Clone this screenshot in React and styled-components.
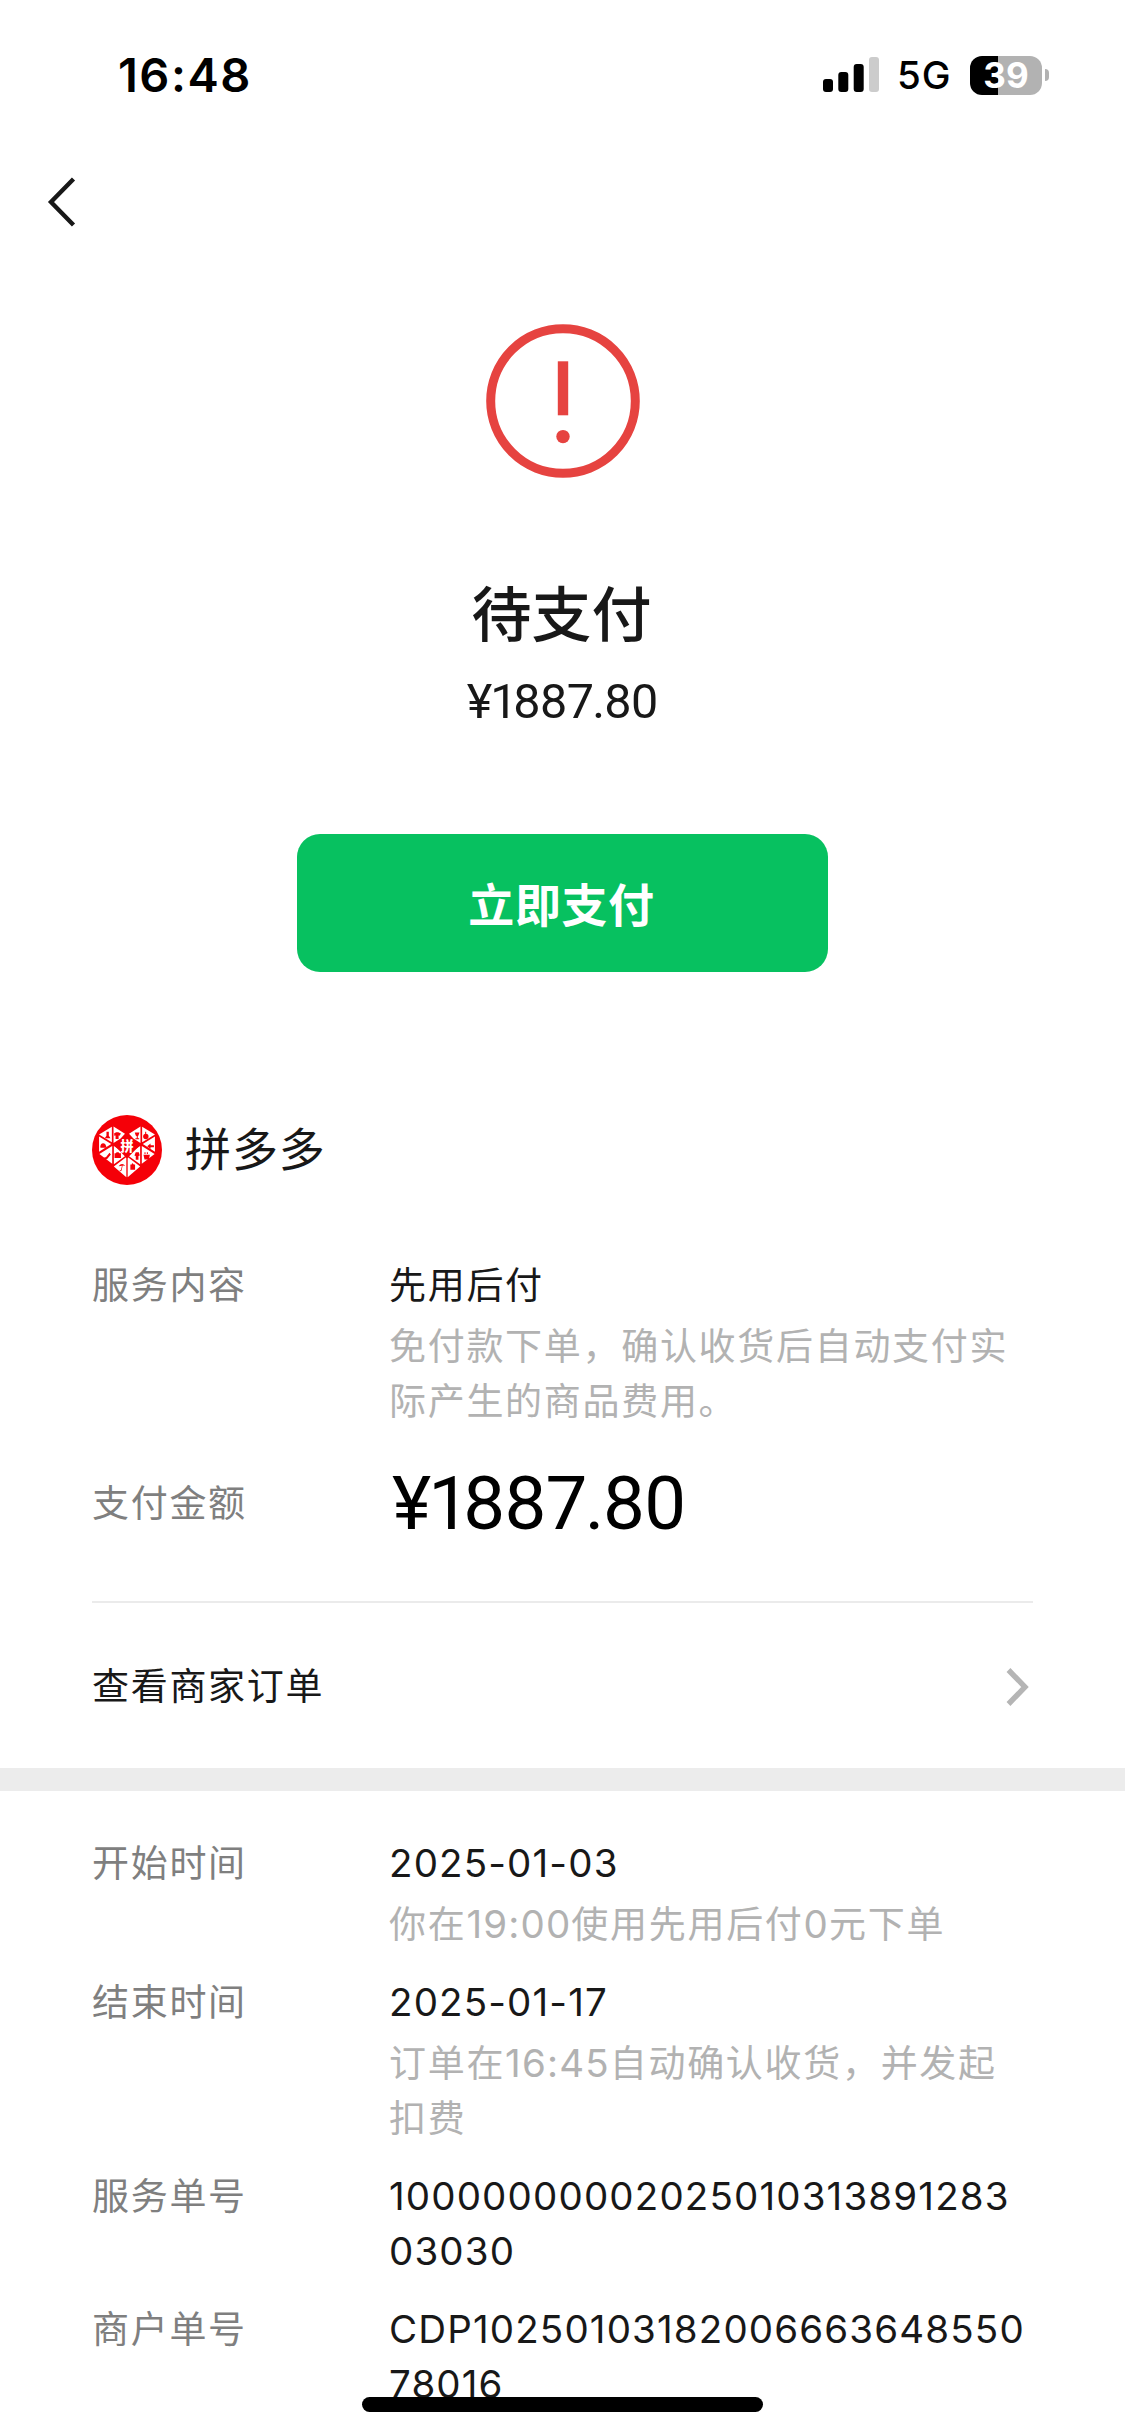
import React from "react";
import styled, { createGlobalStyle } from "styled-components";

const service = [
  {
    label: "服务内容",
    lines: ["先用后付"],
    note: ["免付款下单，确认收货后自动支付实", "际产生的商品费用。"],
  },
];

const records = [
  { label: "开始时间", lines: ["2025-01-03"], note: ["你在19:00使用先用后付0元下单"] },
  {
    label: "结束时间",
    lines: ["2025-01-17"],
    note: ["订单在16:45自动确认收货，并发起", "扣费"],
  },
  { label: "服务单号", lines: ["10000000002025010313891283", "03030"] },
  { label: "商户单号", lines: ["CDP10250103182006663648550", "78016"] },
];

// per-glyph tracking for the price figures, in em
const tracking = { "¥": -0.04, 1: -0.09, 7: -0.035, 8: -0.01, ".": -0.02 };

function Figures({ text }) {
  return text.split("").map((char, i) => (
    <Figure key={i} $tracking={tracking[char] || 0}>
      {char}
    </Figure>
  ));
}

// latin runs are set in Inter, a touch larger than the Chinese around them
function Mixed({ text }) {
  return text
    .split(/([A-Z0-9:-]+)/)
    .filter(Boolean)
    .map((part, i) => (/^[A-Z0-9:-]/.test(part) ? <Latin key={i}>{part}</Latin> : part));
}

function InfoRow({ label, lines, note }) {
  return (
    <Row>
      <Label>{label}</Label>
      <Value>
        {lines.map((line) => (
          <ValueLine key={line}>
            <Mixed text={line} />
          </ValueLine>
        ))}
        {note && (
          <Note>
            {note.map((line) => (
              <ValueLine key={line}>
                <Mixed text={line} />
              </ValueLine>
            ))}
          </Note>
        )}
      </Value>
    </Row>
  );
}

function StatusIcons() {
  return (
    <StatusRight>
      <svg width="56" height="36" viewBox="0 0 56 36">
        <rect x="0" y="22" width="10" height="13" rx="3" fill="#000" />
        <rect x="15.3" y="15" width="10" height="20" rx="3" fill="#000" />
        <rect x="30.7" y="7" width="10" height="28" rx="3" fill="#000" />
        <rect x="46" y="0" width="10" height="35" rx="3" fill="#ccc" />
      </svg>
      <Network>5G</Network>
      <Battery>
        <BatteryBody>39</BatteryBody>
        <BatteryCap />
      </Battery>
    </StatusRight>
  );
}

function MerchantLogo() {
  return (
    <svg width="70" height="70" viewBox="13 11 208 208">
      <circle cx="117" cy="115" r="104" fill="#f50008" />
      <g fill="#fff">
        <path d="M34 69 72 46V92ZM34 75 70 97 34 120ZM35 127 73 103V156Z" />
        <path d="M77 45 111 67 98 81 77 94ZM78 103 116 130 78 157ZM115 136V196L78 164Z" />
        <path d="M200 69 162 46V92ZM200 75 164 97 200 120ZM199 127 161 103V156Z" />
        <path d="M157 45 123 67 136 81 157 94ZM156 103 118 130 156 157ZM119 136V196L156 164Z" />
      </g>
      <path d="M117 66 153 103 117 140 81 103Z" fill="#f50008" />
      <g fill="#f50008">
        <path d="M56 61h7v12l5 7H51l5-7Z" />
        <path d="M79 65 85 62h6l8 4-4 7-3-1v10H83V72l-4 1Z" />
        <path d="M38 104q1-9 8-9t9 9v4H38Z" />
        <path d="M65 123 69 128 58 142 49 143 48 138 55 136Z" />
        <path d="M80 125h4l2-3h6l2 3h5v14H80Z" />
        <path d="M92 163q10-13 20-1l-8-1-3 15q-5 5-6-1h4l3-13Z" />
        <path d="M140 63h14l-3 9-2 2v6h4v3h-11v-3h4v-6l-3-2Z" />
        <circle cx="173" cy="75" r="8" />
        <path d="M171 61h3v9h-3Z" />
        <path d="M177 104 187 96v5h10v6h-10v5Z" />
        <path d="M143 122h9l3 9-4 2v11h-8v-11l-4-2Z" />
        <path d="M166 129h19l-3 14h-13ZM169 122h3v5h-3ZM176 122h3v5h-3Z" />
        <path d="M127 158h4q1-8 6 0h4v16h-14Z" />
      </g>
      <LogoText x="117" y="118" textAnchor="middle">
        拼
      </LogoText>
    </svg>
  );
}

function App() {
  return (
    <>
      <GlobalStyle />
      <Screen>
        <StatusBar>
          <Clock>16:48</Clock>
          <StatusIcons />
        </StatusBar>
        <NavBar>
          <svg width="30" height="52" viewBox="0 0 30 52">
            <path d="M26.5 3 4 26 26.5 49" fill="none" stroke="#181818" strokeWidth="4.4" />
          </svg>
        </NavBar>
        <Summary>
          <svg width="154" height="154" viewBox="0 0 154 154">
            <circle cx="77" cy="77" r="72.3" fill="none" stroke="#e64340" strokeWidth="9" />
            <rect x="71.8" y="37.3" width="10.4" height="54" fill="#e64340" />
            <circle cx="77" cy="112.6" r="6.7" fill="#e64340" />
          </svg>
          <Title>待支付</Title>
          <Price>
            <Figures text="¥1887.80" />
          </Price>
          <PayButton>立即支付</PayButton>
        </Summary>
        <Merchant>
          <MerchantLogo />
          <MerchantName>拼多多</MerchantName>
        </Merchant>
        <ServiceList>
          {service.map((item) => (
            <InfoRow key={item.label} {...item} />
          ))}
        </ServiceList>
        <AmountRow>
          <Label>支付金额</Label>
          <Amount>
            <Figures text="¥1887.80" />
          </Amount>
        </AmountRow>
        <OrderLink>
          <OrderText>查看商家订单</OrderText>
          <svg width="24" height="40" viewBox="0 0 24 40">
            <path d="M2.5 3 19 20 2.5 37" fill="none" stroke="#b5b5b5" strokeWidth="5.4" />
          </svg>
        </OrderLink>
        <Band />
        <RecordList>
          {records.map((item) => (
            <InfoRow key={item.label} {...item} />
          ))}
        </RecordList>
        <HomeIndicator />
      </Screen>
    </>
  );
}

const GlobalStyle = createGlobalStyle`
  * {
    box-sizing: border-box;
  }

  body {
    margin: 0;
    background: #fff;
  }
`;

const Screen = styled.div`
  position: relative;
  width: 1125px;
  height: 2435px;
  overflow: hidden;
  background: #fff;
  color: #181818;
  font-family: "Noto Sans CJK SC", sans-serif;
`;

const StatusBar = styled.div`
  display: flex;
  align-items: center;
  justify-content: space-between;
  height: 150px;
  padding: 0 76px 0 118px;
  color: #000;
  font-family: Inter, sans-serif;
`;

const Clock = styled.div`
  font-size: 47px;
  font-weight: 600;
  letter-spacing: 1.5px;
  line-height: 150px;
`;

const StatusRight = styled.div`
  display: flex;
  align-items: center;
`;

const Network = styled.div`
  width: 71px;
  padding-left: 18px;
  font-size: 38.5px;
  font-weight: 450;
  letter-spacing: 1px;
  line-height: 54px;
`;

const Battery = styled.div`
  display: flex;
  align-items: center;
`;

const BatteryBody = styled.div`
  width: 72px;
  height: 39px;
  margin-left: 20px;
  border-radius: 12px;
  background: linear-gradient(to right, #000 28px, #b2b2b2 28px);
  color: #fff;
  font-size: 35px;
  font-weight: 700;
  line-height: 38px;
  text-align: center;
`;

const BatteryCap = styled.div`
  width: 4px;
  height: 12px;
  margin-left: 3px;
  border-radius: 0 4px 4px 0;
  background: #b2b2b2;
`;

const NavBar = styled.div`
  display: flex;
  align-items: center;
  height: 104px;
  padding-left: 47px;
`;

const Summary = styled.div`
  display: flex;
  flex-direction: column;
  align-items: center;
  padding-top: 70px;
`;

const Title = styled.div`
  margin-top: 88px;
  padding-right: 2px;
  font-size: 60px;
  font-weight: 500;
  line-height: 90px;
`;

const Price = styled.div`
  margin-top: 14px;
  font-family: Roboto, sans-serif;
  font-size: 48.5px;
  line-height: 64px;
`;

const Figure = styled.span`
  letter-spacing: ${(props) => props.$tracking}em;
`;

const PayButton = styled.button`
  width: 531px;
  height: 138px;
  margin-top: 100px;
  padding: 0 2px 2px 0;
  border: none;
  border-radius: 23px;
  background: #07c160;
  color: #fff;
  font-family: inherit;
  font-size: 46px;
  font-weight: 700;
  letter-spacing: 0.6px;
`;

const Merchant = styled.div`
  display: flex;
  align-items: center;
  gap: 23px;
  height: 70px;
  margin: 143px 92px 0;
`;

const MerchantName = styled.div`
  padding-bottom: 8px;
  font-size: 46px;
  letter-spacing: 0.9px;
`;

const LogoText = styled.text`
  fill: #fff;
  font-size: 39px;
  font-weight: 900;
`;

const ServiceList = styled.div`
  padding: 71px 92px 0;
`;

const Row = styled.div`
  display: flex;
  align-items: flex-start;

  & + & {
    margin-top: 23px;
  }
`;

const Label = styled.div`
  flex: none;
  width: 297px;
  color: #7f7f7f;
  font-size: 37px;
  letter-spacing: 1.7px;
  line-height: 55px;
`;

const Value = styled.div`
  font-size: 37px;
  letter-spacing: 1.7px;
`;

const ValueLine = styled.div`
  height: 55px;
  line-height: 55px;
  white-space: nowrap;
`;

const Note = styled.div`
  margin-top: 6px;
  color: #b2b2b2;
`;

const Latin = styled.span`
  font-family: Inter, sans-serif;
  font-size: 38.5px;
  letter-spacing: 1.15px;
`;

const AmountRow = styled.div`
  display: flex;
  align-items: center;
  height: 176px;
  margin: 0 92px;
  padding-bottom: 26px;
  border-bottom: 2px solid #ebebeb;
`;

const Amount = styled.div`
  margin-left: 3px;
  padding-top: 5px;
  color: #000;
  font-family: Roboto, sans-serif;
  font-size: 74.5px;
  line-height: 90px;
`;

const OrderLink = styled.div`
  display: flex;
  align-items: center;
  justify-content: space-between;
  height: 165px;
  padding: 2px 95px 0 92px;
`;

const OrderText = styled.div`
  padding-bottom: 5px;
  font-size: 37px;
  letter-spacing: 1.7px;
`;

const Band = styled.div`
  height: 23px;
  background: #ececec;
`;

const RecordList = styled.div`
  padding: 43px 92px 0;
`;

const HomeIndicator = styled.div`
  position: absolute;
  bottom: 23px;
  left: 362px;
  width: 401px;
  height: 15px;
  border-radius: 8px;
  background: #000;
`;

export default App;
